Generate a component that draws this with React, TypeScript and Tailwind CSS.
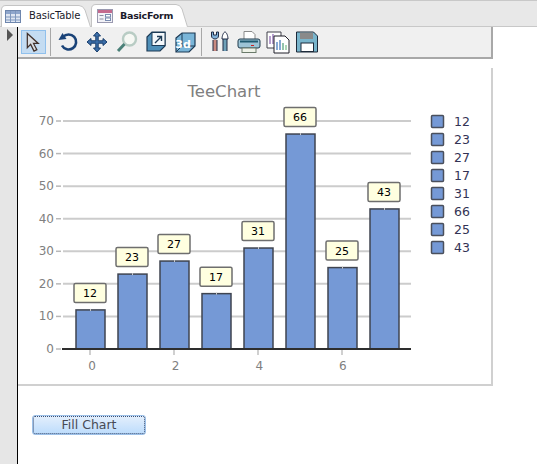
import React from "react";

const vals = [12, 23, 27, 17, 31, 66, 25, 43];
const y0 = 349;
const st = 3.257;
const yOf = (v: number) => y0 - v * st;

function Chart() {
  return (
    <svg width="473" height="316" viewBox="18 68 473 316" className="block" style={{ fontFamily: '"DejaVu Sans", Verdana, sans-serif' }}>
      <text x="224" y="97" textAnchor="middle" fontSize="16.500" fill="#808080">TeeChart</text>
      {[70, 60, 50, 40, 30, 20, 10].map((v) => (
        <line key={v} x1="63" x2="411" y1={yOf(v)} y2={yOf(v)} stroke="#cccccc" strokeWidth="2" />
      ))}
      {[70, 60, 50, 40, 30, 20, 10, 0].map((v) => (
        <g key={v}>
          <line x1="56" x2="61" y1={yOf(v)} y2={yOf(v)} stroke="#b8b8b8" strokeWidth="1.5" />
          <text x="54" y={yOf(v) + 4} textAnchor="end" fontSize="12" fill="#808080">{v}</text>
        </g>
      ))}
      {[0, 2, 4, 6].map((v) => (
        <g key={v}>
          <line x1={90 + v * 42} x2={90 + v * 42} y1="350" y2="355" stroke="#c0c0c0" strokeWidth="1.5" />
          <text x={92 + v * 41.8} y="370" textAnchor="middle" fontSize="12" fill="#808080">{v}</text>
        </g>
      ))}
      {vals.map((v, i) => {
        const x = 76 + i * 42;
        const t = yOf(v);
        return (
          <g key={i}>
            <rect x={x} y={t} width="29" height={y0 - t} fill="#7599d6" stroke="#3f4450" strokeWidth="1.5" />
            <line x1={x + 14.5} x2={x + 14.5} y1={t - 1} y2={t + 1} stroke="#c9c9c9" />
          </g>
        );
      })}
      <line x1="62" x2="411" y1="349" y2="349" stroke="#2e2e2e" strokeWidth="2" />
      {vals.map((v, i) => {
        const x = 74 + i * 42;
        const t = yOf(v) - 26.5;
        return (
          <g key={i}>
            <rect x={x} y={t} width="32" height="19" rx="1.5" fill="#ffffe0" stroke="#6e6e6e" strokeWidth="1.5" />
            <text x={x + 16} y={t + 13.5} textAnchor="middle" fontSize="11" fill="#000000">{v}</text>
          </g>
        );
      })}
      {vals.map((v, i) => {
        const cy = 121.5 + i * 18;
        return (
          <g key={i}>
            <rect x="431.5" y={cy - 6} width="12" height="12" rx="1" fill="#7599d6" stroke="#4a4f5c" strokeWidth="1.5" />
            <text x="454" y={cy + 4.5} fontSize="12.500" fill="#333355">{v}</text>
          </g>
        );
      })}
    </svg>
  );
}

function Tb({ children }: { children: React.ReactNode }) {
  return (
    <div className="w-[24px] h-[24px] flex items-center justify-center shrink-0">
      <svg width="24" height="24" viewBox="0 0 24 24">{children}</svg>
    </div>
  );
}

function TabShape({ w, h }: { w: number; h: number }) {
  return (
    <svg width={w} height={h} viewBox={`0 0 ${w} ${h}`} className="absolute left-0 top-0">
      <path
        d={`M0.5 ${h} V5 Q0.5 0.5 5 0.5 H${w - 12} Q${w - 8} 0.5 ${w - 6} 5 L${w - 0.5} ${h}`}
        fill="#ffffff"
        stroke="#c4c4c4"
      />
    </svg>
  );
}

export default function App() {
  return (
    <div className="w-[537px] h-[464px] bg-white flex flex-col overflow-hidden" style={{ fontFamily: '"DejaVu Sans", sans-serif' }}>
      <div className="h-[27px] bg-[#e8e8e8] flex items-end border-t border-b border-[#c8c8c8] pl-[1px] shrink-0">
        <div className="relative h-[22px] w-[90px] flex items-center pl-[4px] gap-[8px] text-[#1a1a2a] -mb-[1px] shrink-0">
          <TabShape w={90} h={22} />
          <svg width="16" height="13" viewBox="0 0 16 13" className="shrink-0 relative">
            <rect x="0.5" y="0.5" width="15" height="12" fill="#dfe6f2" stroke="#6e86ad" />
            <rect x="1" y="1" width="14" height="3" fill="#8fa6cc" />
            <path d="M1 7h14M1 10h14M5.500 1v11M10.500 1v11" stroke="#7f97bd" />
          </svg>
          <span className="relative text-[10px] tracking-[-0.1px] leading-none">BasicTable</span>
        </div>
        <div className="relative h-[23px] w-[97px] flex items-center pl-[6px] gap-[7px] text-[#1a1a2a] -mb-[1px] shrink-0">
          <TabShape w={97} h={23} />
          <svg width="16" height="14" viewBox="0 0 16 14" className="shrink-0 relative">
            <rect x="0.5" y="0.5" width="15" height="13" fill="#f2f2f7" stroke="#9a9ab0" />
            <rect x="1" y="1" width="14" height="3" fill="#c46a8e" />
            <path d="M2.500 6.500h4M2.500 10h4" stroke="#8c8ca0" />
            <rect x="8.500" y="5.500" width="5" height="2.500" fill="#fff" stroke="#7a8cb0" />
            <rect x="8.500" y="9" width="5" height="2.500" fill="#fff" stroke="#7a8cb0" />
          </svg>
          <span className="relative text-[9.500px] font-bold tracking-[-0.25px] leading-none">BasicForm</span>
        </div>
      </div>
      <div className="flex flex-1 min-h-0">
        <div className="w-[18px] bg-[#e6e6e6] border-r border-black shrink-0 pt-[2px] pl-[7px]">
          <div className="w-0 h-0 border-y-[6px] border-y-transparent border-l-[6px] border-l-[#555555]" />
        </div>
        <div className="flex-1 min-w-0">
          <div className="h-[32px] w-[475px] bg-[#f0f0f0] border-b-2 border-r-2 border-[#a8a8a8] flex items-center pl-[3px]">
            <div className="w-[25px] h-[24px] bg-[#c4dcf2] border border-[#90c0ec] flex items-center justify-center mr-[4px]">
              <svg width="18" height="21" viewBox="0 0 18 22">
                <path d="M2 1.500v15l3.500-3.500 3.500 7 3-1.500-3.500-6.500h5z" fill="#d9dde2" stroke="#40302a" strokeWidth="1.300" />
              </svg>
            </div>
            <div className="w-px h-[28px] bg-[#a8a8a8] mr-[6px]" />
            <div className="flex items-center gap-[5px]">
              <Tb>
                <path d="M6 7a7.500 7.500 0 1 1 -1 8.500" fill="none" stroke="#1a4378" strokeWidth="2.600" />
                <path d="M1.500 10l8 -1 -4 -6z" fill="#1a4378" />
              </Tb>
              <Tb>
                <path d="M11 2l3.500 4h-2.300v4.800H17V8.500l4 3.500-4 3.500v-2.300h-4.800V18h2.300L11 22l-3.500-4h2.300v-4.800H5v2.300L1 12l4-3.500v2.300h4.800V6H7.500z" fill="#3c6ea8" stroke="#163c6c" strokeWidth="1" />
              </Tb>
              <Tb>
                <circle cx="14.500" cy="9" r="6.500" fill="#f6f8f4" stroke="#b8ccc4" strokeWidth="2.400" />
                <path d="M9.500 14l-6.500 7" stroke="#4a8078" strokeWidth="3" />
              </Tb>
              <Tb>
                <path d="M3 7l5-5h13v14l-5 5H3z" fill="#4f8fb8" stroke="#1d3a55" strokeWidth="1.200" />
                <rect x="8" y="2.500" width="13" height="13" fill="#f4f8fb" stroke="#1d3a55" strokeWidth="1" />
                <path d="M11 13l6-6M13 6.500h4.500v4.500" fill="none" stroke="#1d3a55" strokeWidth="1.400" />
              </Tb>
              <Tb>
                <path d="M3 8l6-5h13v13l-6 6H3z" fill="#79b5d8" stroke="#1d3a55" strokeWidth="1.200" />
                <path d="M9 3v13h13M9 16l-6 6" stroke="#1d3a55" fill="none" />
                <text x="10" y="18" textAnchor="middle" fontSize="11" fontWeight="700" fill="#ffffff">3d</text>
              </Tb>
            </div>
            <div className="w-px h-[28px] bg-[#a8a8a8] ml-[4px] mr-[6px]" />
            <div className="flex items-center gap-[5px]">
              <Tb>
                <path d="M7 10v11" stroke="#1f2a44" strokeWidth="5" />
                <path d="M7 10v11" stroke="#c98a80" strokeWidth="3" />
                <path d="M3.500 2v4c0 2 2 3 3.500 3s3.500-1 3.500-3V2l-2 0v3h-3V2z" fill="#7fb0d8" stroke="#1f2a44" />
                <path d="M17 8v13" stroke="#1f2a44" strokeWidth="5" />
                <path d="M17 8v13" stroke="#6fa0b8" strokeWidth="3" />
                <path d="M14 9c0-3 1.500-7 3-7s3 4 3 7z" fill="#fff" stroke="#1f2a44" />
              </Tb>
              <Tb>
                <path d="M7 1.500h8l3 3v7H7z" fill="#fff" stroke="#8a8a8a" />
                <rect x="1" y="9" width="22" height="9" rx="2" fill="#9cc4d6" stroke="#1f3a4d" />
                <rect x="3" y="10.500" width="18" height="2" fill="#1f5a70" />
                <rect x="14" y="15" width="3" height="1" fill="#d02020" />
                <rect x="5" y="18" width="14" height="4.500" fill="#eef2e8" stroke="#6a7a6a" />
              </Tb>
              <Tb>
                <path d="M1 2h14v16H1z" fill="#fff" stroke="#40404a" />
                <path d="M4 14V6M7 14V4M10 14V8" stroke="#a080c0" strokeWidth="1.500" />
                <path d="M8 6h11l4 4v13H8z" fill="#fff" stroke="#20202a" />
                <path d="M11 20v-8M14 20v-10" stroke="#6090c8" strokeWidth="1.500" />
                <path d="M17 20v-7" stroke="#70b090" strokeWidth="1.500" />
                <path d="M20 20v-5" stroke="#90c8a0" strokeWidth="1.500" />
              </Tb>
              <Tb>
                <path d="M1.500 2h17l4 4v16h-21z" fill="#79b5cc" stroke="#1d2a3a" />
                <rect x="5" y="2.500" width="13" height="6.500" fill="#8a8a8a" />
                <rect x="6" y="13" width="12.500" height="8.500" fill="#fff" stroke="#1d2a3a" />
              </Tb>
            </div>
          </div>
          <div className="h-[9px]" />
          <div className="w-[475px] border-r-2 border-b-2 border-[#d0d0d0]">
            <Chart />
          </div>
          <div className="mt-[29px] ml-[14px] w-[114px] h-[20px] rounded-[3px] border border-[#9cc0e8] bg-gradient-to-b from-[#e4effc] to-[#bcdcfc] flex">
            <div className="flex-1 rounded-[2px] border border-dotted border-[#3a4f74] flex items-center justify-center text-[12.500px] leading-none text-[#474a55]">
              Fill Chart
            </div>
          </div>
        </div>
      </div>
    </div>
  );
}
